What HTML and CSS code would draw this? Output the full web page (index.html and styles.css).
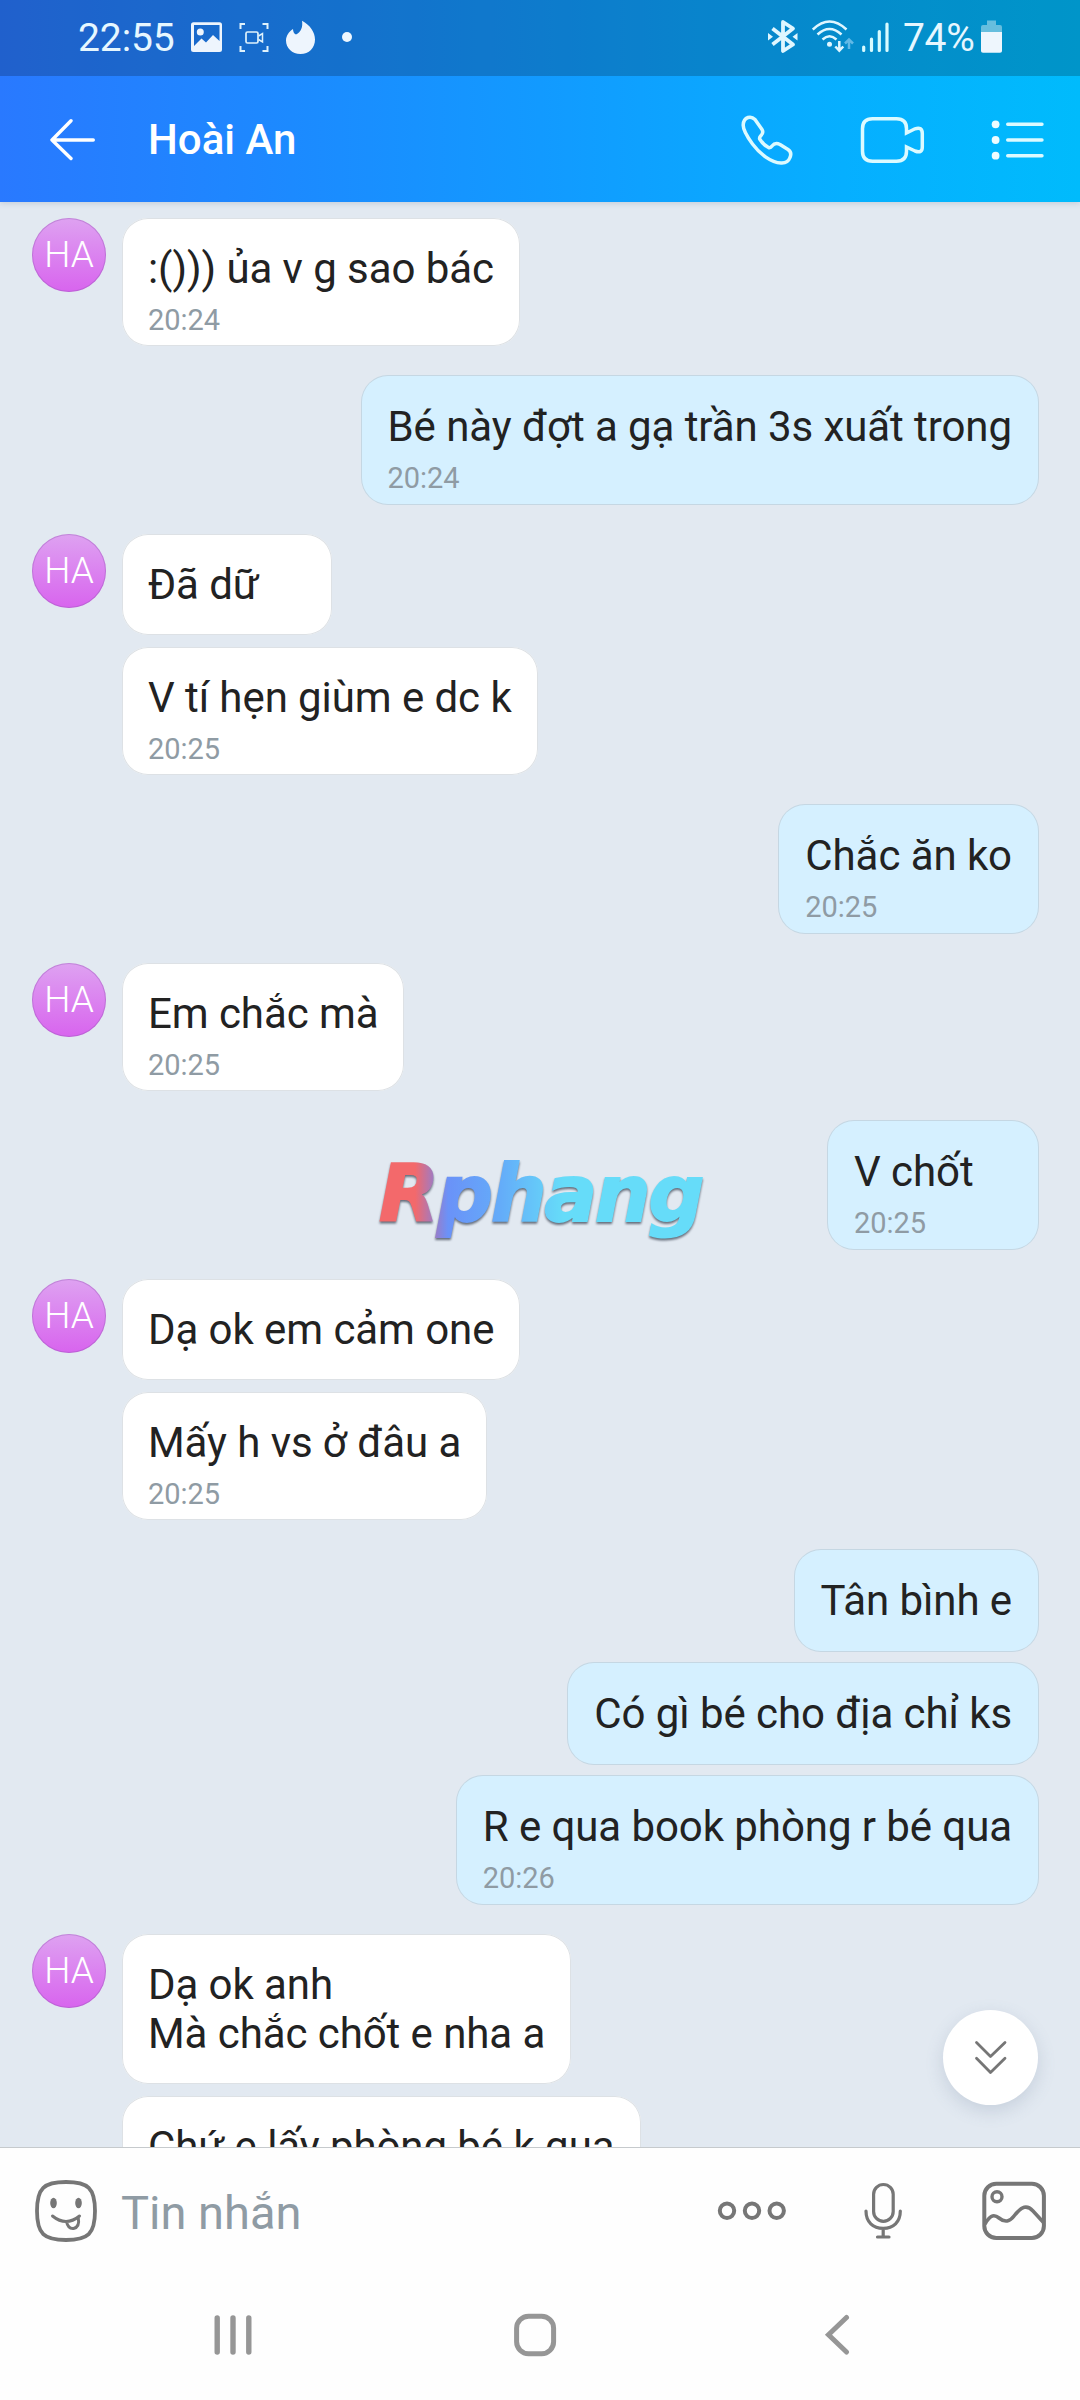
FILE: index.html
```html
<!DOCTYPE html>
<html lang="vi">
<head>
<meta charset="utf-8">
<title>Hoài An</title>
<link rel="stylesheet" href="styles.css">
</head>
<body>
<div class="app">
  <div class="top">
    <div class="status">
      <span class="clock">22:55</span>
      <svg class="s-pic" width="32" height="36" viewBox="191 20 32 36"><path fill="#eef5fd" fill-rule="evenodd" d="M193.500 22.300H219.500Q222 22.300 222 24.800V49.500Q222 52 219.500 52H193.500Q191 52 191 49.500V24.800Q191 22.300 193.500 22.300ZM194 25V46L201.500 38.500L206 42.500L213 35L219.500 41V25Z"/><circle cx="200.300" cy="32" r="3.500" fill="#eef5fd"/></svg>
      <svg class="s-rec" width="30" height="36" viewBox="238.500 20 30 36" fill="none" stroke="#dff2fc" stroke-width="2"><path d="M244.500 24H240V29M262 24H267V29M240 46V51H244.500M267 46V51H262"/><rect x="245.500" y="32" width="12" height="11" rx="1.500" stroke-width="1.700"/><path stroke-width="1.500" d="M258 36L262 33.500V42L258 39.500"/></svg>
      <svg class="s-fire" width="30" height="36" viewBox="286 20 30 36"><path fill="#eef5fd" d="M302 20.700C310 25 315 32 315 39.500C315 48 309 54 300.500 54C292 54 286 48 286 40.500C286 36 289 31.500 293 29C293 31.500 294 34 296 34.500C301 32 303 27 302 20.700Z"/></svg>
      <i class="s-dot"></i>
      <svg class="s-bt" width="30" height="36" viewBox="768 20 30 36"><path fill="none" stroke="#dff6ff" stroke-width="3.800" stroke-linejoin="round" d="M772.500 28.500L793 44.500L783 51V22L793 28.500L772.500 44.500"/><path fill="#dff6ff" d="M768 33L773 36.800L768 40.500ZM797.500 33L792.500 36.800L797.500 40.500Z"/></svg>
      <svg class="s-wifi" width="42" height="36" viewBox="812 20 42 36" fill="none" stroke="#dff6ff" stroke-width="2.500"><path d="M812.800 29.500Q829.500 13.500 846.500 29.500M817.500 34.500Q829.500 23.500 841.500 34.500M822.500 39.500Q829.500 33 836.500 39.500"/><circle cx="829.500" cy="44.200" r="2.500" fill="#dff6ff" stroke="none"/><path d="M839.300 41V50.500M835.300 46.500L839.300 50.700L843.300 46.500"/><path stroke="#62b9e6" d="M849 49V40M845 43.500L849 39.500L853 43.500"/></svg>
      <svg class="s-sig" width="28" height="36" viewBox="861 20 28 36" stroke="#d8fbff" stroke-width="3.200" stroke-linecap="round"><path d="M863.700 47V50.500M871.500 39V50.500M879.300 31.500V50.500M887 24V50.500"/></svg>
      <span class="pct">74%</span>
      <svg class="s-bat" width="22" height="36" viewBox="981 20 22 36"><path fill="#66bede" d="M987 20.500H996V25H1000Q1002 25 1002 27V32H981V27Q981 25 983 25H987Z"/><path fill="#eef6fd" d="M981 32H1002V51Q1002 52.700 1000 52.700H983Q981 52.700 981 51Z"/></svg>
    </div>
    <div class="header">
      <svg width="46" height="44" viewBox="50 118 46 44" fill="none" stroke="#fff" stroke-width="3.400" stroke-linecap="round" stroke-linejoin="round"><path d="M93.300 140H52M71 120.800L52 140L71 158.500"/></svg>
      <h1 class="title">Hoài An</h1>
      <svg class="h-call" width="54" height="52" viewBox="740 113 54 52" fill="none" stroke="#dcfaff" stroke-width="3.500" stroke-linejoin="round"><path d="M748 116.500C751 115.500 753 116.500 755 118.500L762 128.500C763.500 131 763 132.500 761 134.500C759.500 136 759 137 760 138.500C762.500 142.500 765.500 145 768.500 146.500C770 147 771 146.500 772 145C774 142.500 777 142 780 143.500L788 148.500C791 150.500 791.500 153 790 156.500C788.500 160.500 785.500 162.300 781 162C771 161.500 760 153 752.500 143C747 135.500 743 129 743.200 124C743.400 120 745 117.500 748 116.500Z"/></svg>
      <svg class="h-cam" width="66" height="50" viewBox="860 114 66 50" fill="none" stroke="#dcfaff" stroke-width="3.500"><path d="M872.500 117.800H896.500Q906.500 117.800 906.500 127.800V132L915 127.800Q922.300 125.500 922.300 132.500V146Q922.300 152.800 915 150L906.500 146V150.300Q906.500 160.300 896.500 160.300H872.500Q862.500 160.300 862.500 150.300V127.800Q862.500 117.800 872.500 117.800Z"/></svg>
      <svg class="h-list" width="56" height="44" viewBox="990 117 56 44" stroke="#dcfaff" stroke-width="3.400" stroke-linecap="round"><path d="M1007.700 123.300H1042M1007.700 139H1042M1007.700 154.700H1042"/><g fill="#eefcff" stroke="none"><circle cx="995.600" cy="123.300" r="3.900"/><circle cx="995.600" cy="139" r="3.900"/><circle cx="995.600" cy="154.700" r="3.900"/></g></svg>
    </div>
  </div>

  <div class="chat">
    <div class="group"><div class="avatar">HA</div><div class="stack">
      <div class="bubble">:())) ủa v g sao bác<time>20:24</time></div></div></div>
    <div class="group mine"><div class="stack">
      <div class="bubble">Bé này đợt a gạ trần 3s xuất trong<time>20:24</time></div></div></div>
    <div class="group"><div class="avatar">HA</div><div class="stack">
      <div class="bubble">Đã dữ</div>
      <div class="bubble">V tí hẹn giùm e dc k<time>20:25</time></div></div></div>
    <div class="group mine"><div class="stack">
      <div class="bubble">Chắc ăn ko<time>20:25</time></div></div></div>
    <div class="group"><div class="avatar">HA</div><div class="stack">
      <div class="bubble">Em chắc mà<time>20:25</time></div></div></div>
    <div class="group mine"><div class="stack">
      <div class="bubble">V chốt<time>20:25</time></div></div></div>
    <div class="group"><div class="avatar">HA</div><div class="stack">
      <div class="bubble">Dạ ok em cảm one</div>
      <div class="bubble">Mấy h vs ở đâu a<time>20:25</time></div></div></div>
    <div class="group mine"><div class="stack">
      <div class="bubble">Tân bình e</div>
      <div class="bubble">Có gì bé cho địa chỉ ks</div>
      <div class="bubble">R e qua book phòng r bé qua<time>20:26</time></div></div></div>
    <div class="group"><div class="avatar">HA</div><div class="stack">
      <div class="bubble">Dạ ok anh<br>Mà chắc chốt e nha a</div>
      <div class="bubble">Chứ e lấy phòng bé k qua</div></div></div>
    <div class="watermark">Rphang</div>
    <div class="to-end"><svg width="34" height="36" viewBox="974 2040 34 36" fill="none" stroke="#767676" stroke-width="2.800" stroke-linecap="round" stroke-linejoin="round"><path d="M976.500 2042.500L990.500 2056.500L1005 2042.500M976.500 2058.300L990.500 2072.500L1005 2058.300"/></svg></div>
  </div>

  <div class="composer">
    <svg width="64" height="64" viewBox="34 2179 64 64" fill="none" stroke="#767676"><path stroke-width="3.800" d="M66 2182C88 2182 95 2188 95 2211C95 2234 88 2240 66 2240C44 2240 37 2234 37 2211C37 2188 44 2182 66 2182Z"/><g fill="#767676" stroke="none"><ellipse cx="53.500" cy="2203" rx="3.300" ry="5.300"/><ellipse cx="78.500" cy="2203" rx="3.300" ry="5.300"/></g><path stroke-width="3" stroke-linecap="round" d="M52.500 2216Q66 2227 79.500 2216M66.500 2221.500Q68 2229 73.500 2228.500Q80 2227 78.300 2218"/></svg>
    <span class="placeholder">Tin nhắn</span>
    <svg class="c-more" width="70" height="22" viewBox="717 2200 70 22" fill="none" stroke="#767676" stroke-width="4"><circle cx="727" cy="2210.700" r="7.200"/><circle cx="752" cy="2210.700" r="7.200"/><circle cx="776.700" cy="2210.700" r="7.200"/></svg>
    <svg class="c-mic" width="40" height="60" viewBox="863 2182 40 60" fill="none" stroke="#767676" stroke-width="3.200" stroke-linecap="round"><rect x="873.600" y="2185.500" width="19.600" height="36.800" rx="9.800"/><path d="M866 2212C866 2223 873 2229.300 883.200 2229.300C893.400 2229.300 900.300 2223 900.300 2212M883.200 2230V2237.500M877.500 2238H889"/></svg>
    <svg class="c-img" width="66" height="62" viewBox="981 2180 66 62" fill="none" stroke="#767676" stroke-width="4"><rect x="984.300" y="2183.700" width="59.600" height="54.300" rx="12"/><circle cx="997" cy="2196.700" r="5" stroke-width="3.400"/><path stroke-width="3.600" d="M985 2224C989 2217 993 2213 999 2218C1005 2223 1010 2221.500 1014 2216C1022 2206 1027 2204.500 1033 2211L1044 2223"/></svg>
  </div>
  <div class="nav">
    <svg width="40" height="44" viewBox="213 2313 40 44" stroke="#969696" stroke-width="5.400" stroke-linecap="round"><path d="M217.200 2318V2352M233 2318V2352M248.800 2318V2352"/></svg>
    <svg class="n-home" width="44" height="44" viewBox="513 2313 44 44"><rect x="516.600" y="2316.300" width="37" height="37.400" rx="12" fill="none" stroke="#969696" stroke-width="5"/></svg>
    <svg class="n-back" width="26" height="44" viewBox="824 2313 26 44"><path d="M846.500 2317.500L828.500 2334.700L846.500 2352" fill="none" stroke="#969696" stroke-width="5" stroke-linecap="round"/></svg>
  </div>
</div>
</body>
</html>
```

FILE: styles.css
```css
* { box-sizing: border-box; }
body { margin: 0; font-family: Roboto, "Noto Sans", sans-serif; }
svg { display: block; flex: none; }

.app { width: 1080px; height: 2400px; display: flex; flex-direction: column; background: #fefefe; overflow: hidden; }

.top { flex: none; position: relative; z-index: 1; background: linear-gradient(90deg, #2979ff 0%, #1c8aff 27%, #129aff 50%, #06afff 78%, #00bbfc 100%); box-shadow: 0 1px 6px rgba(60, 80, 110, .2); }
.status { height: 76px; background: rgba(0, 0, 0, .2); display: flex; align-items: flex-start; padding: 20px 0 0 78px; color: #e6f7ff; font-size: 39px; line-height: 36px; }
.clock { width: 113px; letter-spacing: -.1px; }
.s-rec { margin-left: 15.500px; }
.s-fire { margin-left: 17.500px; }
.s-dot { width: 10px; height: 10px; border-radius: 50%; background: #eef7ff; margin: 12px 0 0 26px; }
.s-bt { margin-left: auto; }
.s-wifi { margin-left: 14px; }
.s-sig { margin-left: 7px; }
.pct { width: 78px; margin-left: 14px; letter-spacing: -.3px; }
.s-bat { margin-right: 77px; }

.header { height: 126px; display: flex; align-items: center; padding: 2px 34px 0 50px; color: #fff; }
.title { margin: 0 0 0 52px; flex: 1; font-size: 42px; font-weight: 500; line-height: 48px; }
.h-cam { margin-left: 66px; }
.h-list { margin-left: 64px; }

.chat { flex: 1; min-height: 0; position: relative; overflow: hidden; background: #e2e9f1; padding: 16px 42px 0 32px; display: flex; flex-direction: column; gap: 30px; }
.group { flex: none; display: flex; align-items: flex-start; gap: 16px; }
.mine { justify-content: flex-end; }
.stack { display: flex; flex-direction: column; align-items: flex-start; gap: 12px; }
.mine .stack { align-items: flex-end; }
.avatar { flex: none; width: 74px; height: 74px; border-radius: 50%; background: linear-gradient(#dea2f1, #d864ee); box-shadow: inset 0 0 0 1px rgba(150, 90, 180, .4); color: #fff; font-size: 37px; font-weight: 300; line-height: 74px; text-align: center; }
.bubble { min-width: 210px; padding: 26px; border-radius: 26px; background: #fff; box-shadow: inset 0 0 0 1px #dde1e5; color: #222; font-size: 42px; line-height: 49px; letter-spacing: -.07px; white-space: nowrap; }
.bubble:has(time) { padding-bottom: 9px; }
.mine .bubble { background: #d5f0ff; box-shadow: 0 0 0 1px #c5d7e3; }
time { display: block; margin-top: 10px; font-size: 29px; line-height: 34px; color: #8f9ba4; }

.watermark { position: absolute; left: 379px; top: 947px; padding-right: 6px; font: italic bold 78px/90px "DejaVu Sans", sans-serif; letter-spacing: -2px; color: transparent; -webkit-text-stroke: 2px transparent; background: linear-gradient(90deg, #f3696b 0, #f3696b 11%, #9a7cc8 17%, #6a92f8 21%, #64acf9 37%, #66dcf9 56%); -webkit-background-clip: text; background-clip: text; filter: drop-shadow(0 2px 1px rgba(60, 70, 85, .75)); }
.to-end { position: absolute; right: 42px; bottom: 42px; width: 95px; height: 95px; border-radius: 50%; background: #fff; box-shadow: 0 6px 18px rgba(90, 110, 140, .2); display: flex; align-items: center; justify-content: center; }

.composer { flex: none; height: 129px; border-top: 1px solid #c6cacd; display: flex; align-items: center; padding: 0 33px 2px 34px; background: #fefefe; }
.placeholder { flex: 1; margin-left: 23px; font-size: 47px; line-height: 54px; color: #8f9ba4; padding-top: 3px; }
.c-mic { margin-left: 76px; }
.c-img { margin-left: 78px; }
.nav { flex: none; height: 124px; display: flex; align-items: flex-start; padding: 37px 230px 0 213px; }
.n-home { margin-left: 260px; }
.n-back { margin-left: auto; }
```
